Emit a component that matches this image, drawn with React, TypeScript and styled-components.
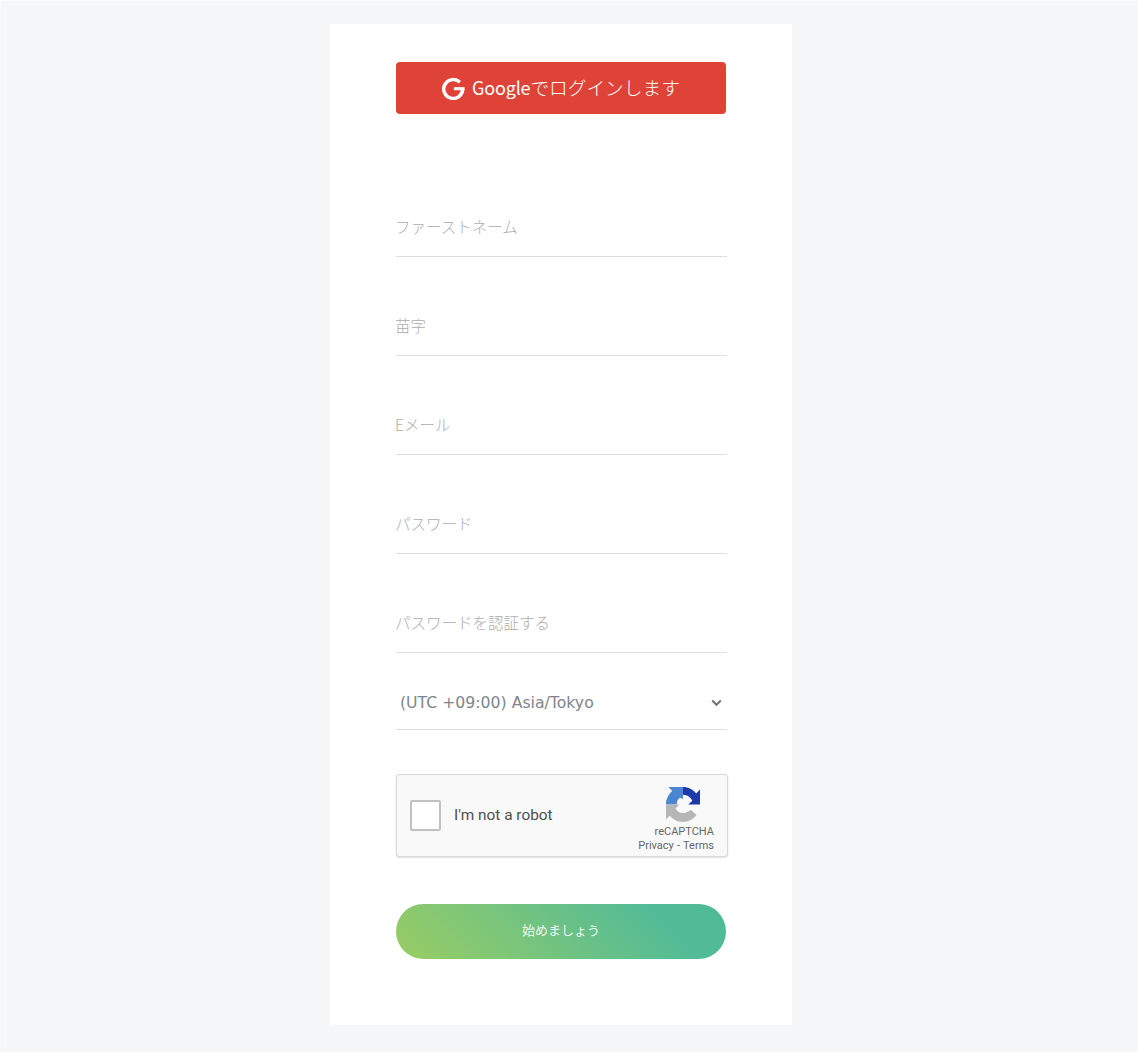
import { createGlobalStyle } from "styled-components";
import styled from "styled-components";

const GlobalStyle = createGlobalStyle`
    html, body {
        margin: 0;
        padding: 0;
        background-color: #f6f7f9;
    }
    * {
        box-sizing: border-box;
    }
`;

const Page = styled.div`
    width: 1138px;
    height: 1052px;
    padding: 24px 0 27px 330px;
    border-top: 1px solid #fafbfc;
    border-left: 1px solid #fafbfc;
    margin: 0;
    background-color: #f6f7f9;
    font-family: "Noto Sans CJK JP", "Noto Sans", sans-serif;
    overflow: hidden;
`;

const Card = styled.form`
    width: 462px;
    height: 1001px;
    margin-top: -1px;
    margin-left: -1px;
    padding: 38px 65px 0 66px;
    background-color: #ffffff;
`;

const GoogleButton = styled.button`
    display: flex;
    align-items: center;
    justify-content: center;
    gap: 7px;
    width: 330px;
    height: 52px;
    padding: 0;
    margin-bottom: 44px;
    border: none;
    border-radius: 4px;
    background-color: #df4337;
    color: #ffffff;
    font-family: "Noto Sans CJK JP", sans-serif;
    font-size: 18.7px;
    font-weight: 300;
`;

const GoogleIcon = styled.svg`
    width: 23px;
    height: 23px;
    flex-shrink: 0;
`;

const GoogleLabel = styled.span`
    padding-bottom: 3px;
`;

const GoogleWord = styled.span`
    font-size: 18px;
    font-weight: 400;
    letter-spacing: -0.2px;
`;

const Field = styled.div`
    width: 331px;
    height: 99px;
    display: flex;
    flex-direction: column;
    justify-content: flex-end;
`;

const TextInput = styled.input`
    width: 100%;
    height: 58px;
    padding: 0 0 3px 0;
    border: none;
    border-bottom: 1px solid #dfdfdf;
    background: transparent;
    font-family: "Noto Sans CJK JP", sans-serif;
    font-size: 15.5px;
    font-weight: 300;
    text-indent: -1px;
    outline: none;

    &::placeholder {
        color: #adadad;
        opacity: 1;
    }
`;

const SelectWrap = styled.div`
    position: relative;
    width: 331px;
    height: 77px;
    display: flex;
    flex-direction: column;
    justify-content: flex-end;
`;

const TimezoneSelect = styled.select`
    width: 100%;
    height: 50px;
    padding: 0 0 4px 4px;
    border: none;
    border-bottom: 1px solid #dfdfdf;
    border-radius: 0;
    appearance: none;
    background: transparent;
    color: #80858a;
    font-family: "DejaVu Sans", sans-serif;
    font-size: 15.7px;
    outline: none;
`;

const Chevron = styled.svg`
    position: absolute;
    right: 5px;
    bottom: 23px;
    width: 11px;
    height: 8px;
    pointer-events: none;
`;

const Captcha = styled.div`
    display: flex;
    align-items: center;
    justify-content: space-between;
    width: 332px;
    height: 83px;
    margin-top: 44px;
    padding: 0 13px 0 13px;
    border: 1px solid #d8d8d8;
    border-radius: 3px;
    background-color: #f9f9f9;
    box-shadow: 0 1px 2px rgba(0, 0, 0, 0.12);
`;

const CaptchaCheck = styled.div`
    display: flex;
    align-items: center;
    gap: 13px;
`;

const CheckBox = styled.div`
    width: 31px;
    height: 31px;
    border: 2px solid #c1c1c1;
    border-radius: 2px;
    background-color: #ffffff;
`;

const CaptchaLabel = styled.span`
    padding-bottom: 2px;
    font-family: Roboto, sans-serif;
    font-size: 15.4px;
    color: #4f4f4f;
`;

const CaptchaBrand = styled.div`
    display: flex;
    flex-direction: column;
    align-items: flex-end;
    padding-top: 9px;
`;

const CaptchaLogo = styled.svg`
    width: 34px;
    height: 35px;
    margin-right: 14px;
    margin-bottom: 3px;
`;

const BrandName = styled.div`
    font-family: Roboto, sans-serif;
    font-size: 11px;
    line-height: 14px;
    color: #666666;
`;

const BrandLinks = styled.div`
    font-family: Roboto, sans-serif;
    font-size: 11px;
    line-height: 14px;
    color: #666666;
    word-spacing: 0.5px;
`;

const SubmitButton = styled.button`
    display: block;
    width: 330px;
    height: 55px;
    margin-top: 47px;
    padding: 0 0 4px 0;
    border: none;
    border-radius: 28px;
    background: linear-gradient(45deg, #9acd63 0%, #52bb97 80%, #50ba98 100%);
    color: rgba(255, 255, 255, 0.9);
    font-family: "Noto Sans CJK JP", sans-serif;
    font-size: 13px;
`;

const placeholders = ["ファーストネーム", "苗字", "Eメール", "パスワード", "パスワードを認証する"];

const App: React.FC = () => {
    return (
        <>
            <GlobalStyle />
            <Page>
                <Card>
                    <GoogleButton type="button">
                        <GoogleIcon viewBox="0 0 24 24">
                            <path d="M18.6 5.4 A9.9 9.9 0 1 0 21.6 12.6" fill="none" stroke="#ffffff" strokeWidth="3.6" />
                            <path d="M12.4 10.6 H23.6 V13.8 H12.4 Z" fill="#ffffff" />
                        </GoogleIcon>
                        <GoogleLabel>
                            <GoogleWord>Google</GoogleWord>でログインします
                        </GoogleLabel>
                    </GoogleButton>
                    {placeholders.map((text) => (
                        <Field key={text}>
                            <TextInput placeholder={text} />
                        </Field>
                    ))}
                    <SelectWrap>
                        <TimezoneSelect defaultValue="tokyo">
                            <option value="tokyo">(UTC +09:00) Asia/Tokyo</option>
                        </TimezoneSelect>
                        <Chevron viewBox="0 0 11 8">
                            <path d="M1.2 1.5 L5.5 5.8 L9.8 1.5" fill="none" stroke="#6f7479" strokeWidth="2" />
                        </Chevron>
                    </SelectWrap>
                    <Captcha>
                        <CaptchaCheck>
                            <CheckBox />
                            <CaptchaLabel>I'm not a robot</CaptchaLabel>
                        </CaptchaCheck>
                        <CaptchaBrand>
                            <CaptchaLogo viewBox="0 0 64 64" preserveAspectRatio="none">
                                <path
                                    d="M32 0H4.6l7.15 7.2C4.6 13 0 22 0 32h20c0-.6 0-1 .2-1.4.5-6.2 3-9 6-11L32 22Z"
                                    fill="#4a86d2"
                                />
                                <path
                                    d="M64 32V4.7l-7.2 7.15C50.9 4.7 42 .1 32 .1V14c5 .1 7.9 1.3 10 2.9 4.1 2.3 6 5.5 7.4 8.3L42 32Z"
                                    fill="#1c3aa9"
                                />
                                <path
                                    d="M0 32v27.3l7.2-7.2C13 59.3 22 63.9 32 63.9c10.4 0 19.6-5 25.4-12.6L46 41c-1.2 2.1-2.8 3-4.8 4.3-2 1.6-5 2.4-9 2.4-.6 0-1-.1-1.4-.2-6.2-.5-9.6-3-12.7-7.9L25 32Z"
                                    fill="#b6b6b6"
                                />
                            </CaptchaLogo>
                            <BrandName>reCAPTCHA</BrandName>
                            <BrandLinks>Privacy - Terms</BrandLinks>
                        </CaptchaBrand>
                    </Captcha>
                    <SubmitButton type="button">始めましょう</SubmitButton>
                </Card>
            </Page>
        </>
    );
};

export default App;
